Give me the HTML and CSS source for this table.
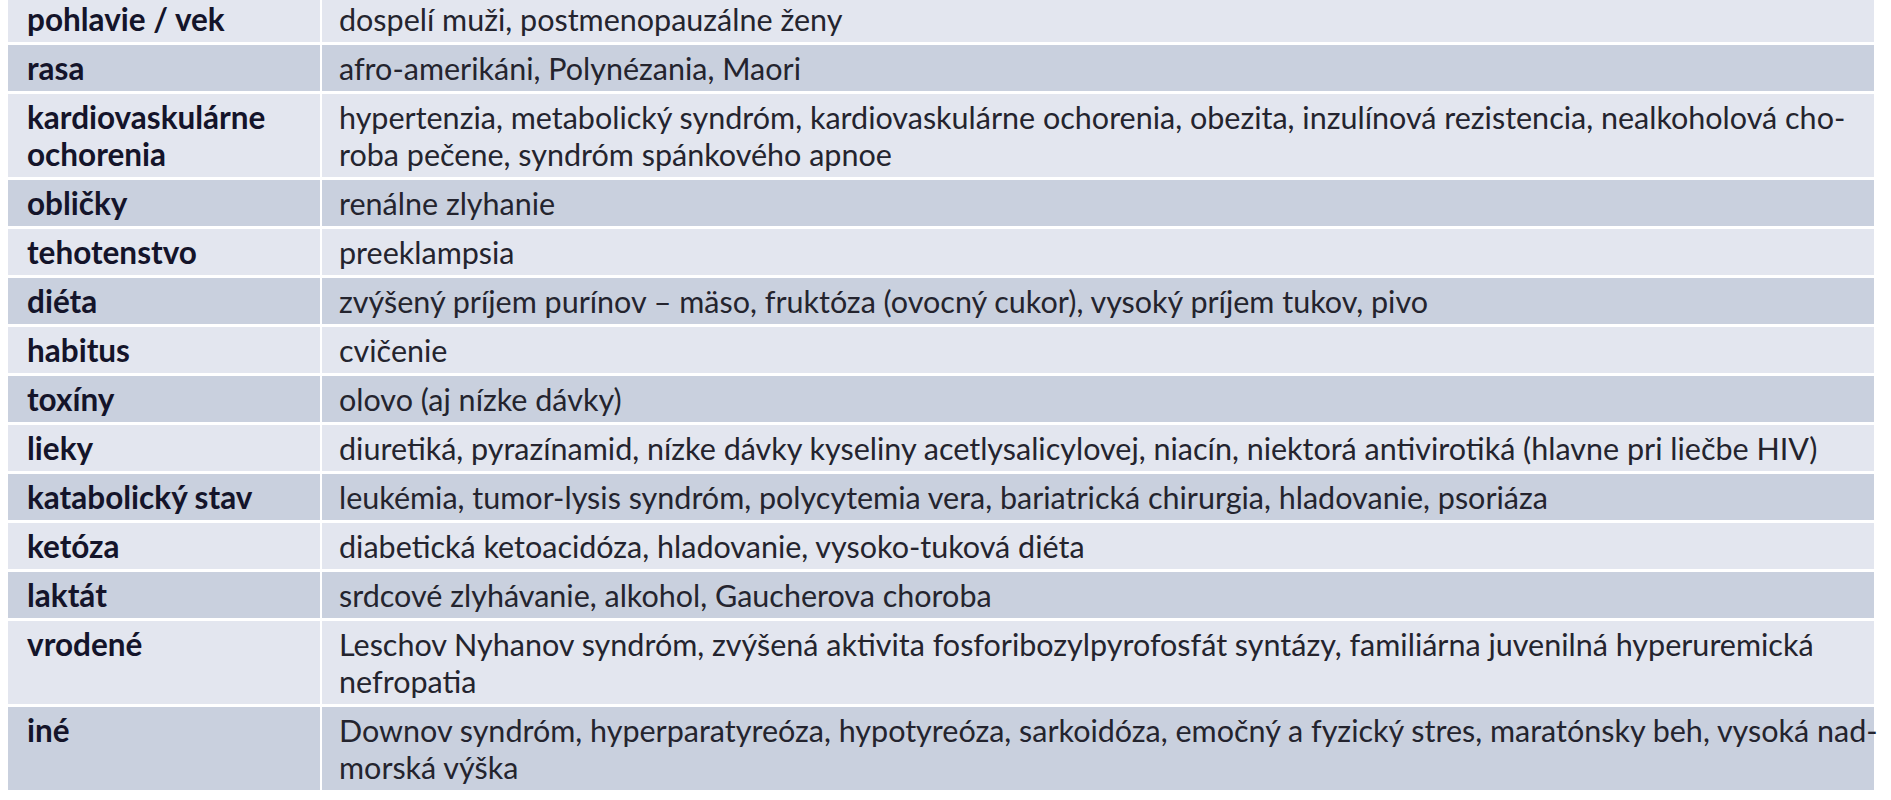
FILE: index.html
```html
<!DOCTYPE html>
<html lang="sk">
<head>
<meta charset="utf-8">
<title>Rizikové faktory hyperurikémie</title>
<link rel="stylesheet" href="styles.css">
</head>
<body>
<div class="table">
  <div class="cell head light">pohlavie / vek</div>
  <div class="cell val light">dospelí muži, postmenopauzálne ženy</div>

  <div class="cell head dark">rasa</div>
  <div class="cell val dark">afro-amerikáni, Polynézania, Maori</div>

  <div class="cell head light">kardiovaskulárne<br>ochorenia</div>
  <div class="cell val light">hypertenzia, metabolický syndróm, kardiovaskulárne ochorenia, obezita, inzulínová rezistencia, nealkoholová cho-<br>roba pečene, syndróm spánkového apnoe</div>

  <div class="cell head dark">obličky</div>
  <div class="cell val dark">renálne zlyhanie</div>

  <div class="cell head light">tehotenstvo</div>
  <div class="cell val light">preeklampsia</div>

  <div class="cell head dark">diéta</div>
  <div class="cell val dark">zvýšený príjem purínov – mäso, fruktóza (ovocný cukor), vysoký príjem tukov, pivo</div>

  <div class="cell head light">habitus</div>
  <div class="cell val light">cvičenie</div>

  <div class="cell head dark">toxíny</div>
  <div class="cell val dark">olovo (aj nízke dávky)</div>

  <div class="cell head light">lieky</div>
  <div class="cell val light">diuretiká, pyrazínamid, nízke dávky kyseliny acetlysalicylovej, niacín, niektorá antivirotiká (hlavne pri liečbe HIV)</div>

  <div class="cell head dark">katabolický stav</div>
  <div class="cell val dark">leukémia, tumor-lysis syndróm, polycytemia vera, bariatrická chirurgia, hladovanie, psoriáza</div>

  <div class="cell head light">ketóza</div>
  <div class="cell val light">diabetická ketoacidóza, hladovanie, vysoko-tuková diéta</div>

  <div class="cell head dark">laktát</div>
  <div class="cell val dark">srdcové zlyhávanie, alkohol, Gaucherova choroba</div>

  <div class="cell head light">vrodené</div>
  <div class="cell val light">Leschov Nyhanov syndróm, zvýšená aktivita fosforibozylpyrofosfát syntázy, familiárna juvenilná hyperuremická<br>nefropatia</div>

  <div class="cell head dark">iné</div>
  <div class="cell val dark">Downov syndróm, hyperparatyreóza, hypotyreóza, sarkoidóza, emočný a fyzický stres, maratónsky beh, vysoká nad-<br>morská výška</div>
</div>
</body>
</html>
```

FILE: styles.css
```css
html, body {
  margin: 0;
  padding: 0;
  background: #ffffff;
}

body {
  padding: 0 8px;
  font-family: Lato, "Liberation Sans", sans-serif;
  font-size: 30.5px;
  line-height: 37px;
  color: #24242e;
}

.table {
  display: grid;
  grid-template-columns: 312px 1552px;
  column-gap: 2px;
  row-gap: 3px;
  margin-top: -4px;
}

.cell {
  padding: 5px 0 4px 19px;
  white-space: nowrap;
}

.head {
  font-weight: 700;
  font-size: 31.5px;
  color: #14142a;
}

.val {
  padding-left: 17px;
}

.light {
  background: #e3e6ef;
}

.dark {
  background: #c9d0de;
}
```
